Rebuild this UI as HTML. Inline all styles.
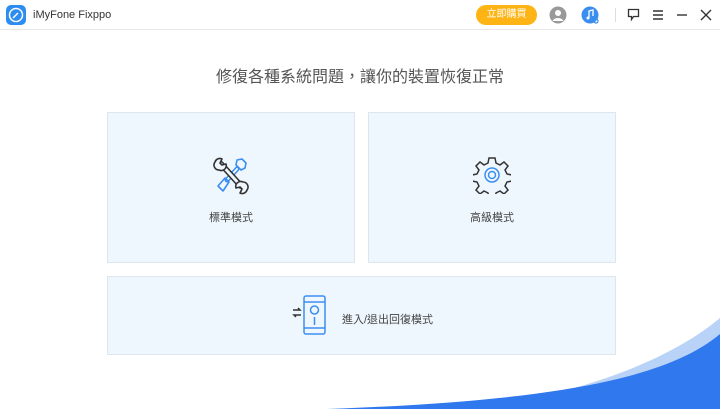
<!DOCTYPE html>
<html><head><meta charset="utf-8"><style>
*{margin:0;padding:0;box-sizing:border-box}
body{width:720px;height:409px;overflow:hidden;background:#fff;position:relative;font-family:"Liberation Sans","Noto Sans CJK TC",sans-serif;color:#333}
.top{position:absolute;left:0;top:0;width:720px;height:30px;border-bottom:1px solid #e8e8e8}
.logo{position:absolute;left:6px;top:5px;width:20px;height:20px;border-radius:5px;background:#2d8cf0}
.name{position:absolute;left:33px;top:9px;font-size:11px;color:#333}
.buy{position:absolute;left:476px;top:5px;width:61px;height:20px;border-radius:10px;background:#fdb414;color:#fff;font-size:10px;text-align:center;line-height:20px}
h1{position:absolute;left:0;width:720px;top:63px;text-align:center;font-weight:normal;font-size:16px;color:#555}
.card{position:absolute;background:#eff7fe;border:1px solid #dde6ee}
.lbl{position:absolute;font-size:11px;color:#444}
</style></head><body>
<div class="top">
<div class="logo"><svg width="20" height="20"><circle cx="10" cy="10" r="6.5" fill="none" stroke="#fff" stroke-width="1.5"/><path d="M7 13L12 8" stroke="#fff" stroke-width="1.5"/></svg></div>
<div class="name">iMyFone Fixppo</div>
<div class="buy">立即購買</div>
<svg style="position:absolute;left:549px;top:6px" width="18" height="18"><circle cx="9" cy="9" r="8.5" fill="#999"/><circle cx="9" cy="7" r="3" fill="#fff"/><path d="M3.5 15a6 5 0 0 1 11 0" fill="#fff"/></svg>
<svg style="position:absolute;left:581px;top:6px" width="20" height="20"><circle cx="9" cy="9" r="8.5" fill="#3b8ef0"/><path d="M8 12V5l4-1v6" stroke="#fff" stroke-width="1.3" fill="none"/><circle cx="7" cy="12" r="1.5" fill="#fff"/><circle cx="15" cy="15" r="2" fill="none" stroke="#3b8ef0" stroke-width="1.2"/></svg>
<div style="position:absolute;left:615px;top:8px;width:1px;height:14px;background:#ddd"></div>
<svg style="position:absolute;left:627px;top:8px" width="14" height="14"><path d="M1.5 1.5h10v7h-5l-2 3v-3h-3z" fill="none" stroke="#333" stroke-width="1.3"/></svg>
<svg style="position:absolute;left:651px;top:8px" width="14" height="14"><path d="M2 3h10M2 7h10M2 11h10" stroke="#333" stroke-width="1.4"/></svg>
<svg style="position:absolute;left:675px;top:8px" width="14" height="14"><path d="M2 7h10" stroke="#333" stroke-width="1.4"/></svg>
<svg style="position:absolute;left:699px;top:8px" width="14" height="14"><path d="M2 2l10 10M12 2L2 12" stroke="#333" stroke-width="1.4"/></svg>
</div>
<h1>修復各種系統問題，讓你的裝置恢復正常</h1>
<div class="card" style="left:107px;top:112px;width:248px;height:151px"></div>
<div class="card" style="left:368px;top:112px;width:248px;height:151px"></div>
<div class="card" style="left:107px;top:276px;width:509px;height:79px"></div>
<svg style="position:absolute;left:212px;top:157px" width="38" height="38" fill="none" stroke-linecap="round" stroke-linejoin="round">
<g stroke="#3b8ef0" stroke-width="1.6">
<path d="M25 3l5-1 4 4-1 5-4 2-5-5z"/>
<path d="M25 12L15 23" stroke-width="5" />
<path d="M25 12L15 23" stroke="#eff7fe" stroke-width="2"/>
<path d="M13 21l4 4-6 9-5-5z"/>
</g>
<g stroke="#333" stroke-width="1.6">
<path d="M9 7L29 29" stroke-width="6"/>
<path d="M9 7L29 29" stroke="#eff7fe" stroke-width="2.8"/>
<path d="M3 5a5 5 0 0 1 7-3l-2 4 2 2 4-1a5 5 0 0 1-7 6a5 5 0 0 1-4-8z" fill="#eff7fe"/>
<path d="M35 33a5 5 0 0 1-7 3l2-4-2-2-4 1a5 5 0 0 1 7-6a5 5 0 0 1 4 8z" fill="#eff7fe"/>
</g>
</svg>
<div class="lbl" style="left:209px;top:209px">標準模式</div>
<svg style="position:absolute;left:473px;top:156px" width="38" height="38" fill="none">
<path d="M16 2h6l1 5 4 2 4-3 4 4-3 4 2 4 5 1v6l-5 1-2 4 3 4-4 4-4-3-4 2-1 5h-6l-1-5-4-2-4 3-4-4 3-4-2-4-5-1v-6l5-1 2-4-3-4 4-4 4 3 4-2z" stroke="#333" stroke-width="1.5"/>
<circle cx="19" cy="19" r="7" stroke="#3b8ef0" stroke-width="1.5"/><circle cx="19" cy="19" r="3.5" stroke="#3b8ef0" stroke-width="1.5"/>
</svg>
<div class="lbl" style="left:470px;top:209px">高級模式</div>
<svg style="position:absolute;left:292px;top:295px" width="36" height="42" fill="none" stroke-width="1.5">
<path d="M1 15h7l-2-2M9 20H2l2 2" stroke="#333"/>
<rect x="12" y="1" width="21" height="38" rx="2" stroke="#3b8ef0"/><path d="M12 7h21M12 33h21" stroke="#3b8ef0"/>
<circle cx="22.5" cy="15" r="4" stroke="#3b8ef0"/><path d="M22.5 22v8" stroke="#3b8ef0"/>
</svg>
<div class="lbl" style="left:342px;top:311px">進入/退出回復模式</div>
<svg style="position:absolute;left:0;top:0" width="720" height="409">
<path d="M470 409C580 395 670 360 720 318V409Z" fill="#b9d2f8"/>
<path d="M327 409C520 402 660 385 720 334V409Z" fill="#2f78ee"/>
</svg>
</body></html>
